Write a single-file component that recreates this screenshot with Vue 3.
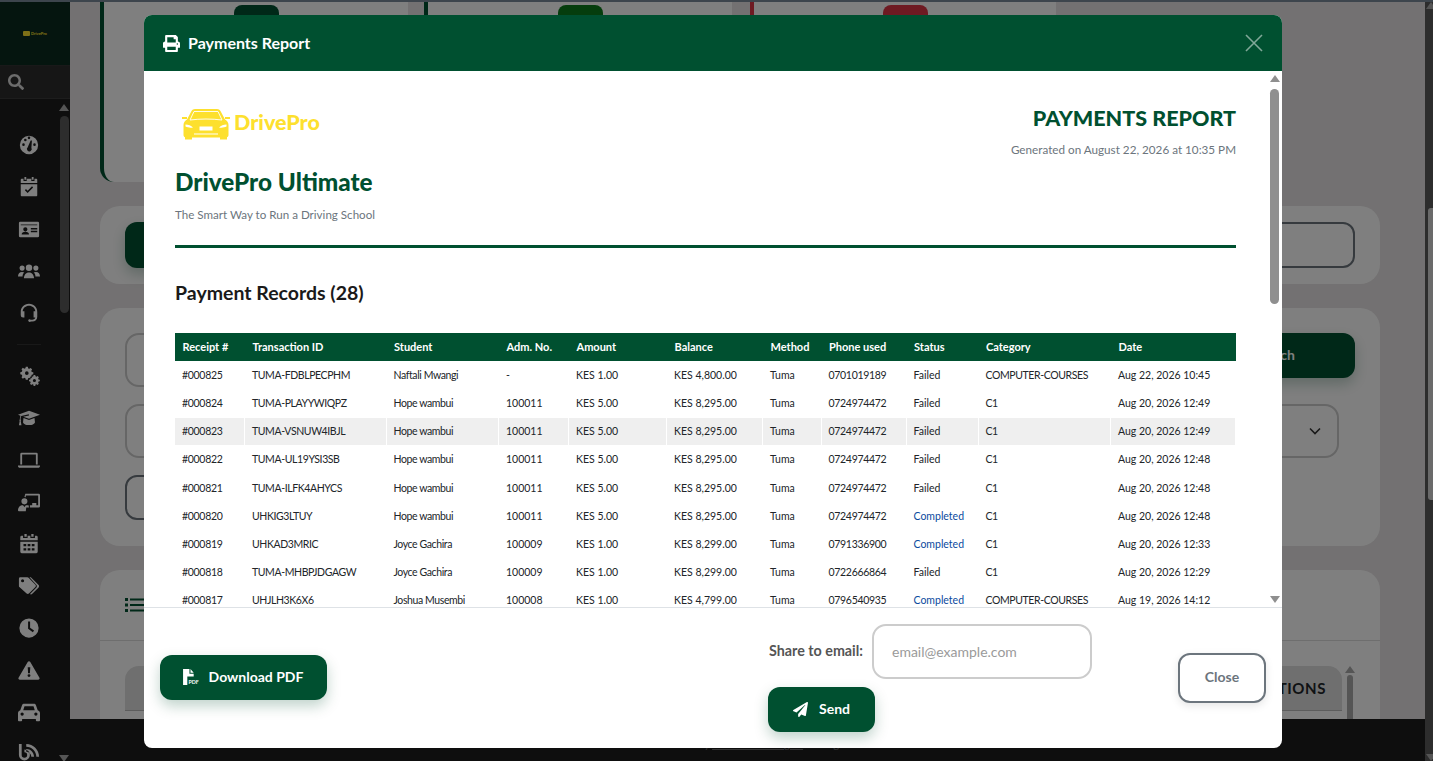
<script setup>
import { ref } from 'vue'

const columns = [
  { key: 'receipt', label: 'Receipt #', w: 70 },
  { key: 'txn', label: 'Transaction ID', w: 141.5 },
  { key: 'student', label: 'Student', w: 112.5 },
  { key: 'adm', label: 'Adm. No.', w: 70 },
  { key: 'amount', label: 'Amount', w: 98 },
  { key: 'balance', label: 'Balance', w: 96 },
  { key: 'method', label: 'Method', w: 58.5 },
  { key: 'phone', label: 'Phone used', w: 85 },
  { key: 'status', label: 'Status', w: 72 },
  { key: 'category', label: 'Category', w: 132.5 },
  { key: 'date', label: 'Date', w: 125 },
]

function row(receipt, txn, student, adm, amount, balance, phone, status, category, date) {
  return { receipt, txn, student, adm, amount, balance, method: 'Tuma', phone, status, category, date }
}

const payments = ref([
  row('#000825', 'TUMA-FDBLPECPHM', 'Naftali Mwangi', '-', 'KES 1.00', 'KES 4,800.00', '0701019189', 'Failed', 'COMPUTER-COURSES', 'Aug 22, 2026 10:45'),
  row('#000824', 'TUMA-PLAYYWIQPZ', 'Hope wambui', '100011', 'KES 5.00', 'KES 8,295.00', '0724974472', 'Failed', 'C1', 'Aug 20, 2026 12:49'),
  row('#000823', 'TUMA-VSNUW4IBJL', 'Hope wambui', '100011', 'KES 5.00', 'KES 8,295.00', '0724974472', 'Failed', 'C1', 'Aug 20, 2026 12:49'),
  row('#000822', 'TUMA-UL19YSI3SB', 'Hope wambui', '100011', 'KES 5.00', 'KES 8,295.00', '0724974472', 'Failed', 'C1', 'Aug 20, 2026 12:48'),
  row('#000821', 'TUMA-ILFK4AHYCS', 'Hope wambui', '100011', 'KES 5.00', 'KES 8,295.00', '0724974472', 'Failed', 'C1', 'Aug 20, 2026 12:48'),
  row('#000820', 'UHKIG3LTUY', 'Hope wambui', '100011', 'KES 5.00', 'KES 8,295.00', '0724974472', 'Completed', 'C1', 'Aug 20, 2026 12:48'),
  row('#000819', 'UHKAD3MRIC', 'Joyce Gachira', '100009', 'KES 1.00', 'KES 8,299.00', '0791336900', 'Completed', 'C1', 'Aug 20, 2026 12:33'),
  row('#000818', 'TUMA-MHBPJDGAGW', 'Joyce Gachira', '100009', 'KES 1.00', 'KES 8,299.00', '0722666864', 'Failed', 'C1', 'Aug 20, 2026 12:29'),
  row('#000817', 'UHJLH3K6X6', 'Joshua Musembi', '100008', 'KES 1.00', 'KES 4,799.00', '0796540935', 'Completed', 'COMPUTER-COURSES', 'Aug 19, 2026 14:12'),
])

const email = ref('')
const hoverRow = '#000823'

// sidebar icons, 24x24 box
const navTop = [
  'M12 2a10 10 0 1 0 0 20 10 10 0 0 0 0-20zM6 13a1.4 1.4 0 1 1 0-2.800 1.4 1.4 0 0 1 0 2.800zm2-5a1.400 1.400 0 1 1 0-2.800A1.400 1.400 0 0 1 8 8zm4-2.400a1.400 1.400 0 1 1 0-2.800 1.400 1.400 0 0 1 0 2.800zM14.600 15a2.600 2.600 0 1 1-4-.600L13.800 7h1.400zM18 13a1.400 1.400 0 1 1 0-2.800 1.400 1.400 0 0 1 0 2.800z',
  'M7 1h2v3H7zM15 1h2v3h-2zM4 3h2v2.500h3.500V3h5v2.500H18V3h2a1 1 0 0 1 1 1v3.500H3V4a1 1 0 0 1 1-1zM3 9h18v12a1 1 0 0 1-1 1H4a1 1 0 0 1-1-1zm4.500 6.500 3 3 6-6-1.200-1.200-4.800 4.800-1.800-1.800z',
  'M2 4h20a1.500 1.500 0 0 1 1 1.500v14a1.500 1.500 0 0 1-1.500 1.500h-19A1.500 1.500 0 0 1 1 19.500v-14A1.500 1.500 0 0 1 2 4zm1 3v1h18V7zm5 3a2.300 2.300 0 1 0 0 4.600A2.300 2.300 0 0 0 8 10zm-4 8h8c0-2-1.500-3-4-3s-4 1-4 3zm10-7v1.500h7V11zm0 3v1.500h7V14z',
  'M12 5a3.500 3.500 0 1 1 0 7 3.500 3.500 0 0 1 0-7zM4.500 6a2.800 2.800 0 1 1 0 5.600 2.800 2.800 0 0 1 0-5.600zm15 0a2.800 2.800 0 1 1 0 5.600 2.800 2.800 0 0 1 0-5.600zM0 18c0-3 1.500-5 4.500-5 1 0 1.800.3 2.400.7C5.500 14.800 5 16.400 5 18zm24 0h-5c0-1.600-.5-3.200-1.900-4.300.6-.4 1.400-.7 2.400-.7 3 0 4.500 2 4.500 5zM6.500 20c0-3.500 2-6.500 5.500-6.500s5.500 3 5.500 6.500z',
  'M12 2C6.500 2 3 6 3 11v3.500a2.500 2.500 0 0 0 2.500 2.500H7v-7H5.100C5.500 6.500 8.300 4 12 4s6.500 2.500 6.900 6H17v7h1.900c-.4 1.500-1.500 2.300-3.400 2.300h-1.700a1.500 1.500 0 1 0 0 2h1.700c3.300 0 5.500-2 5.500-5.300V11c0-5-3.500-9-9-9z',
]
const navBottom = [
  'M8.500 2h2.200l.4 1.700 1.300.5 1.500-.9 1.500 1.500-.9 1.500.5 1.300 1.700.4v2.200l-1.700.4-.5 1.300.9 1.500-1.500 1.500-1.500-.9-1.300.5-.4 1.700H8.500l-.4-1.700-1.300-.5-1.500.9-1.500-1.500.9-1.500-.5-1.300L2.500 10V7.800l1.700-.4.5-1.300-.9-1.500 1.500-1.500 1.500.9 1.300-.5zM9.600 6.900a2 2 0 1 0 0 4 2 2 0 0 0 0-4zM17 11h1.800l.3 1.400 1.100.4 1.200-.7 1.300 1.300-.7 1.200.4 1.100 1.400.3v1.800l-1.400.3-.4 1.100.7 1.200-1.300 1.300-1.200-.7-1.100.4-.3 1.400H17l-.3-1.400-1.100-.4-1.200.7-1.300-1.300.7-1.200-.4-1.100-1.400-.3V16l1.400-.3.4-1.100-.7-1.200 1.300-1.300 1.200.7 1.100-.4zm.9 4.200a1.700 1.700 0 1 0 0 3.400 1.700 1.700 0 0 0 0-3.400z',
  'M12 4 24 8.500l-12 4.300L5.700 10.500 12 9.200 11.800 8 3.500 9.800C3 11 2.800 12.500 2.800 13.500c.6.400.6 1.200.1 1.600L3.800 20H1l.9-4.900c-.5-.4-.5-1.200.1-1.600 0-1.300.2-2.700.7-4L0 8.500zM6 12l6 2.200 6-2.200.5 4.500c0 1.700-3 3.200-6.500 3.200s-6.500-1.500-6.500-3.200z',
  'M4 4h16a1.500 1.500 0 0 1 1.500 1.500V17h-2V6h-15v11h-2V5.500A1.500 1.500 0 0 1 4 4zM0 18h24v.800c0 .9-.9 1.700-2 1.700H2c-1.100 0-2-.8-2-1.700z',
  'M8 3h14.500A1.500 1.500 0 0 1 24 4.500v12a1.500 1.500 0 0 1-1.500 1.500H13v-2.500h2.500V13H20v2.500h2V5H8.500v1.800A5 5 0 0 0 7 6.500zM7 8a3.300 3.300 0 1 1 0 6.600A3.300 3.300 0 0 1 7 8zM0 21c0-3 2-5.500 4-5.500h1.500L7 17.500l1.500-2h3L12 18H9l-.5 4H1a1 1 0 0 1-1-1z',
  'M7 1h2.500v3H7zM14.500 1H17v3h-2.500zM4 3h1.500v2.500h5V3h3v2.500h5V3H20a1.500 1.500 0 0 1 1.500 1.500V8h-19V4.500A1.500 1.500 0 0 1 4 3zM2.500 9.500h19v11A1.500 1.500 0 0 1 20 22H4a1.500 1.500 0 0 1-1.500-1.500zM6 12v2.500h3V12zm4.500 0v2.500h3V12zm4.500 0v2.500h3V12zM6 16.500V19h3v-2.500zm4.500 0V19h3v-2.500zm4.500 0V19h3v-2.500z',
  'M1 4a1.500 1.500 0 0 1 1.500-1.500h7.700c.5 0 1 .2 1.300.6l7.500 7.500c.7.7.7 1.800 0 2.500l-7.100 7.100c-.7.7-1.800.7-2.500 0L1.500 13.200c-.3-.3-.5-.8-.5-1.300zm4 .5a1.700 1.700 0 1 0 0 3.400 1.700 1.700 0 0 0 0-3.400zm9-2 8.500 8.500c.7.7.7 1.800 0 2.500l-7.200 7.200c-.6.6-1.700.6-2.200 0l7-7.200c.7-.7.7-1.800 0-2.500L12.500 2.500z',
  'M12 1.500a10.500 10.500 0 1 0 0 21 10.500 10.500 0 0 0 0-21zM11 5h2.200v6.600l4.300 3.100-1.300 1.800L11 12.700z',
  'M12 2.500c.6 0 1.100.3 1.400.8l10 17.200c.6 1-.2 2.200-1.400 2.200H2c-1.200 0-2-1.200-1.400-2.200l10-17.200c.3-.5.8-.8 1.400-.8zM10.600 9l.4 6.500h2l.4-6.500zM12 16.500a1.600 1.600 0 1 0 0 3.200 1.600 1.600 0 0 0 0-3.200z',
  'M6.500 3h11c1 0 1.800.6 2.100 1.500L21.500 10c1.400.4 2.500 1.700 2.500 3.200V21a1 1 0 0 1-1 1h-2.500a1 1 0 0 1-1-1v-1.500h-15V21a1 1 0 0 1-1 1H1a1 1 0 0 1-1-1v-7.800C0 11.700 1.100 10.400 2.500 10l1.900-5.500C4.700 3.600 5.500 3 6.500 3zm.6 2.700L5.700 10h12.600l-1.400-4.300zM4.500 12.500a1.800 1.800 0 1 0 0 3.600 1.800 1.800 0 0 0 0-3.600zm15 0a1.800 1.800 0 1 0 0 3.600 1.800 1.800 0 0 0 0-3.600z',
  'M1 1h3v12a3 3 0 1 0 3-3V7a6 6 0 1 1-6 6zM9 1c7.700 0 14 6.300 14 14h-3C20 8.900 15.100 4 9 4zm0 5.500c4.700 0 8.500 3.800 8.500 8.500h-3c0-3-2.500-5.500-5.500-5.500z',
]
</script>

<template>
  <div class="page">
    <div class="top-strip"></div>
    <div class="shell">
      <aside class="sidebar">
        <div class="side-logo">
          <span class="side-logo-car"></span>
          <span class="side-logo-text">DrivePro</span>
        </div>
        <div class="side-search">
          <svg class="side-search-icon" viewBox="0 0 512 512"><path fill="currentColor" d="M505 442.7L405.3 343c-4.500-4.500-10.600-7-17-7H372c27.600-35.300 44-79.700 44-128C416 93.100 322.900 0 208 0S0 93.100 0 208s93.100 208 208 208c48.300 0 92.700-16.400 128-44v16.300c0 6.400 2.500 12.500 7 17l99.700 99.700c9.400 9.400 24.600 9.400 33.900 0l28.300-28.300c9.400-9.400 9.400-24.600.1-34zM208 336c-70.700 0-128-57.200-128-128 0-70.700 57.200-128 128-128 70.700 0 128 57.200 128 128 0 70.700-57.200 128-128 128z"/></svg>
        </div>
        <div class="side-body">
          <nav class="side-nav">
            <svg v-for="(d, i) in navTop" :key="'t' + i" class="nav-icon" viewBox="0 0 24 24"><path fill="currentColor" fill-rule="evenodd" :d="d"/></svg>
            <div class="side-sep"></div>
            <svg v-for="(d, i) in navBottom" :key="'b' + i" class="nav-icon" viewBox="0 0 24 24"><path fill="currentColor" fill-rule="evenodd" :d="d"/></svg>
          </nav>
          <div class="side-scroll">
            <span class="arrow-up"></span>
            <span class="side-thumb"></span>
            <span class="arrow-down side-arrow-bottom"></span>
          </div>
        </div>
      </aside>

      <div class="main">
        <div class="content">
          <div class="stat-row">
            <div class="stat-card"><span class="stat-badge"></span></div>
            <div class="stat-card"><span class="stat-badge badge-ok"></span></div>
            <div class="stat-card stat-card-red"><span class="stat-badge badge-red"></span></div>
          </div>

          <div class="card card-bar">
            <button class="bg-btn bar-btn"></button>
            <div class="bg-outline"></div>
          </div>

          <div class="card card-filters">
            <div class="filter-row">
              <div class="bg-field"></div>
              <button class="bg-btn search-btn">Search</button>
            </div>
            <div class="filter-row filter-row-select">
              <div class="bg-field bg-select">
                <svg class="chevron" viewBox="0 0 12 8"><path d="M1 1.500 6 6.500 11 1.500" fill="none" stroke="currentColor" stroke-width="1.600"/></svg>
              </div>
            </div>
            <div class="bg-reset"></div>
          </div>

          <div class="card card-list">
            <div class="list-head">
              <svg class="list-icon" viewBox="0 0 20 16"><path fill="currentColor" d="M0 1h3v3H0zM5 1.500h15v2H5zM0 6.500h3v3H0zM5 7h15v2H5zM0 12h3v3H0zM5 12.500h15v2H5z"/></svg>
            </div>
            <div class="list-body">
              <div class="list-table-head">ACTIONS</div>
              <div class="list-scroll">
                <span class="arrow-up"></span>
                <span class="list-thumb"></span>
              </div>
            </div>
          </div>
        </div>
        <footer class="foot">Powered by <u>Tuma Technologies</u> · All rights reserved</footer>
      </div>

      <div class="page-scroll">
        <span class="arrow-up"></span>
        <span class="page-thumb"></span>
        <span class="arrow-down"></span>
      </div>
    </div>

    <div class="overlay"></div>

    <div class="modal">
      <header class="modal-head">
        <svg class="head-icon" viewBox="0 0 512 512"><path fill="currentColor" d="M448 192V77.250c0-8.490-3.370-16.620-9.370-22.630L393.370 9.370c-6-6-14.140-9.370-22.630-9.370H96C78.330 0 64 14.330 64 32v160c-35.350 0-64 28.650-64 64v112c0 8.840 7.160 16 16 16h48v96c0 17.670 14.330 32 32 32h320c17.670 0 32-14.330 32-32v-96h48c8.840 0 16-7.160 16-16V256c0-35.350-28.650-64-64-64zm-64 256H128v-96h256v96zm0-224H128V64h192v48c0 8.840 7.160 16 16 16h48v96zm48 72c-13.250 0-24-10.750-24-24 0-13.260 10.750-24 24-24s24 10.740 24 24c0 13.250-10.750 24-24 24z"/></svg>
        <h1 class="modal-title">Payments Report</h1>
        <svg class="modal-x" viewBox="0 0 18 18"><path d="M1 1 17 17M17 1 1 17" fill="none" stroke="currentColor" stroke-width="1.600"/></svg>
      </header>

      <div class="modal-mid">
        <div class="report">
          <div class="report-top">
            <div>
              <div class="logo">
                <svg class="logo-car" viewBox="0 0 48 31">
                  <path fill="#fde02e" d="M3 28h7v2.500H3zM38 28h7v2.500h-7z"/>
                  <path fill="#fde02e" d="M0 8h5v2H0zM43 8h5v2h-5z"/>
                  <path fill="#fde02e" d="M9.500 2C10.200.700 11.500 0 13 0h22c1.500 0 2.800.7 3.500 2L43 10.500c2 1.200 3.500 3 3.500 5.500v10c0 1.500-1 2.500-2.500 2.500H4c-1.500 0-2.500-1-2.500-2.500V16c0-2.500 1.500-4.300 3.500-5.500z"/>
                  <path fill="none" stroke="#fff" stroke-width=".9" d="M12 2.500h24l4 8.500c-10-1.300-22-1.300-32 0z"/>
                  <path fill="#fff" d="M3.500 15.500c3 0 5.500 1 7.500 3-3 .5-5.500 0-7.500-1zM44.500 15.500c-3 0-5.500 1-7.500 3 3 .5 5.500 0 7.500-1zM17.500 17.500h13v4h-13zM12 24.500h24v1H12z"/>
                </svg>
                <span class="logo-text">DrivePro</span>
              </div>
              <h2 class="brand">DrivePro Ultimate</h2>
              <p class="tagline">The Smart Way to Run a Driving School</p>
            </div>
            <div class="report-meta">
              <h2 class="report-title">PAYMENTS REPORT</h2>
              <p class="generated">Generated on August 22, 2026 at 10:35 PM</p>
            </div>
          </div>
          <div class="rule"></div>
          <h3 class="records">Payment Records (28)</h3>

          <table class="pay-table">
            <colgroup>
              <col v-for="c in columns" :key="c.key" :style="{ width: c.w + 'px' }">
            </colgroup>
            <thead>
              <tr>
                <th v-for="c in columns" :key="c.key">{{ c.label }}</th>
              </tr>
            </thead>
            <tbody>
              <tr v-for="p in payments" :key="p.receipt" :class="{ hovered: p.receipt === hoverRow }">
                <td
                  v-for="c in columns"
                  :key="c.key"
                  :class="['c-' + c.key, { done: c.key === 'status' && p.status === 'Completed' }]"
                >{{ p[c.key] }}</td>
              </tr>
            </tbody>
          </table>
        </div>
        <div class="modal-scroll">
          <span class="arrow-up"></span>
          <span class="modal-thumb"></span>
          <span class="arrow-down modal-arrow-bottom"></span>
        </div>
      </div>

      <footer class="modal-foot">
        <button class="btn-green btn-download">
          <svg class="pdf-icon" viewBox="0 0 16 16">
            <path fill="currentColor" d="M1 0h6v4.500h4V7H5v8H1zM8 0l3 3.500H8z"/>
            <text x="6" y="14.500" class="pdf-label">PDF</text>
          </svg>
          <span class="btn-text">Download PDF</span>
        </button>

        <div class="share">
          <div class="share-row">
            <label class="share-label" for="share-email">Share to email:</label>
            <input id="share-email" v-model="email" class="share-input" type="email" placeholder="email@example.com">
          </div>
          <button class="btn-green btn-send">
            <svg class="send-icon" viewBox="0 0 512 512"><path fill="currentColor" d="M476 3.200L12.500 270.600c-18.100 10.400-15.800 35.600 2.200 43.200L121 358.400l287.300-253.200c5.500-4.900 13.300 2.600 8.600 8.300L176 407v80.500c0 23.600 28.500 32.900 42.500 15.800L282 426l124.600 52.200c14.200 6 30.400-2.900 33-18.200l72-432C515 7.800 493.300-6.800 476 3.200z"/></svg>
            <span class="btn-text">Send</span>
          </button>
        </div>

        <button class="btn-close"><span class="btn-text btn-text-close">Close</span></button>
      </footer>
    </div>
  </div>
</template>

<style>
html, body { margin: 0; overflow: hidden; }
</style>

<style scoped>
.page {
  position: relative;
  height: 761px;
  overflow: hidden;
  display: flex;
  flex-direction: column;
  font-family: Lato, "Open Sans", sans-serif;
  background: #e6e3e4;
}
.top-strip { height: 2px; background: #7a8a9a; flex: none; }
.shell { flex: 1; display: flex; min-height: 0; }

/* sidebar */
.sidebar { width: 70px; flex: none; background: #1c1c1c; display: flex; flex-direction: column; }
.side-logo { height: 63px; background: #0a2a1e; border-bottom: 1px solid #333; display: flex; align-items: center; justify-content: center; gap: 1px; padding-right: 0; }
.side-logo-car { width: 7px; height: 5px; background: #fde02e; border-radius: 1px; }
.side-logo-text { font-size: 4px; font-weight: 700; color: #fde02e; }
.side-search { height: 32px; background: #2c2c2c; border-bottom: 1px solid #3a3a3a; display: flex; align-items: center; padding-left: 8px; }
.side-search-icon { width: 16px; height: 16px; color: #d8d8d8; }
.side-body { flex: 1; display: flex; min-height: 0; overflow: hidden; }
.side-nav { width: 58px; display: flex; flex-direction: column; align-items: center; padding-top: 35px; gap: 20px; color: #fff; }
.nav-icon { width: 22px; height: 22px; flex: none; }
.side-sep { width: 24px; height: 1px; background: #333; flex: none; }
.side-scroll { width: 12px; position: relative; display: flex; flex-direction: column; align-items: center; padding-top: 5px; gap: 5px; height: 663px; box-sizing: border-box; }
.side-thumb { width: 9px; height: 197px; background: #5a5a5a; border-radius: 5px; }
.side-arrow-bottom { position: absolute; bottom: 0; }

.arrow-up, .arrow-down { width: 0; height: 0; border-left: 5px solid transparent; border-right: 5px solid transparent; flex: none; }
.arrow-up { border-bottom: 7px solid #aaa; }
.arrow-down { border-top: 7px solid #aaa; }

/* page behind the modal */
.main { flex: 1; min-width: 0; display: flex; flex-direction: column; }
.content { flex: 1; min-height: 0; overflow: hidden; padding: 0 45px 0 30px; display: flex; flex-direction: column; gap: 24px; }
.stat-row { display: flex; gap: 16px; flex: none; }
.stat-card { width: 308px; height: 180px; box-sizing: border-box; background: #fff; border-left: 4px solid #005030; border-bottom-left-radius: 14px; display: flex; justify-content: center; padding-top: 3px; }
.stat-card-red { border-left-color: #dc3545; width: 306px; margin-left: 2px; }
.stat-badge { width: 45px; height: 30px; border-radius: 8px; background: #005030; }
.badge-ok { background: #0a7a1a; }
.badge-red { background: #dc3545; }

.card { background: #fff; border-radius: 20px; flex: none; box-sizing: border-box; }
.card-bar { height: 78px; padding: 16px 25px; display: flex; justify-content: space-between; }
.bg-btn { border: none; border-radius: 12px; background: #005030; color: #fff; font: 700 14px Lato, sans-serif; box-shadow: 0 6px 14px rgba(0, 80, 48, .25); }
.bar-btn { width: 300px; height: 46px; }
.bg-outline { width: 500px; height: 46px; box-sizing: border-box; border: 2px solid #6c757d; border-radius: 12px; }

.card-filters { height: 238px; padding: 25px 25px 0; display: flex; flex-direction: column; gap: 17px; }
.filter-row { display: flex; gap: 16px; align-items: flex-start; }
.filter-row-select { padding-right: 16px; }
.bg-field { flex: 1; height: 54px; box-sizing: border-box; border: 2px solid #ccc; border-radius: 14px; display: flex; align-items: center; justify-content: flex-end; padding-right: 16px; }
.chevron { width: 12px; height: 8px; color: #333; }
.search-btn { width: 160px; height: 45px; text-align: right; padding: 0 60px 2px 0; }
.bg-reset { width: 200px; height: 45px; box-sizing: border-box; border: 2px solid #6c757d; border-radius: 12px; }

.card-list { flex: 1; min-height: 300px; }
.list-head { height: 70px; border-bottom: 1px solid #ddd; padding-left: 25px; display: flex; align-items: center; color: #005030; }
.list-icon { width: 20px; height: 16px; }
.list-body { padding: 25px 25px 0 25px; display: flex; gap: 3px; }
.list-table-head { flex: 1; height: 44px; background: #dedede; border-radius: 14px 14px 0 0; border-bottom: 1px solid #bbb; text-align: right; padding-right: 16px; line-height: 44px; font-size: 15px; font-weight: 700; letter-spacing: .6px; color: #212529; }
.list-scroll { width: 10px; display: flex; flex-direction: column; align-items: center; gap: 2px; }
.list-thumb { width: 6px; height: 60px; background: #aaa; border-radius: 3px; }

.foot { height: 42px; flex: none; background: #1c1c1c; color: #666; font-size: 11px; line-height: 50px; padding-left: 56px; text-align: center; white-space: nowrap; box-sizing: border-box; }
.page-scroll { width: 8px; flex: none; background: #5a5a5a; display: flex; flex-direction: column; align-items: flex-end; justify-content: space-between; position: relative; }
.page-scroll .arrow-up, .page-scroll .arrow-down { margin-right: -3px; }
.page-thumb { position: absolute; right: 0; top: 206px; width: 5px; height: 292px; background: #fff; border-radius: 3px 0 0 3px; opacity: .75; }

.overlay { position: absolute; inset: 0; background: rgba(0, 0, 0, .5); }

/* modal */
.modal {
  position: absolute;
  left: 144px;
  top: 15px;
  width: 1138px;
  height: 733px;
  background: #fff;
  border-radius: 8px;
  overflow: hidden;
  display: flex;
  flex-direction: column;
}
.modal-head { height: 56px; flex: none; background: #005030; color: #fff; display: flex; align-items: center; padding: 0 19px; }
.head-icon { width: 17px; height: 17px; margin-right: 8px; }
.modal-title { margin: 0 0 2px; font-size: 16px; font-weight: 700; flex: 1; }
.modal-x { width: 18px; height: 18px; color: rgba(255, 255, 255, .5); }

.modal-mid { flex: 1; min-height: 0; display: flex; border-bottom: 1px solid #dee2e6; }
.report { flex: 1; min-width: 0; overflow: hidden; padding: 30px 34px 0 31px; }
.report-top { display: flex; justify-content: space-between; height: 144px; }
.logo { display: flex; align-items: center; gap: 4px; padding-left: 7px; height: 46px; }
.logo-car { width: 48px; height: 31px; }
.logo-text { font-size: 21.5px; font-weight: 900; color: #fde02e; margin-bottom: 4px; }
.brand { margin: 20px 0 0; font-size: 24.300px; line-height: 30px; font-weight: 900; color: #005030; }
.tagline { margin: 10px 0 0; font-size: 11.600px; line-height: 16px; color: #6c757d; }
.report-meta { text-align: right; padding-top: 4px; }
.report-title { margin: 0; font-size: 21.500px; line-height: 26px; font-weight: 900; color: #005030; }
.generated { margin: 10px 0 0; font-size: 11.700px; line-height: 16px; color: #6c757d; }
.rule { height: 3px; background: #005030; }
.records { margin: 32px 0 0; font-size: 19.500px; line-height: 26px; font-weight: 700; color: #1a1a1a; }

.pay-table { margin: 27px 0 0 -1px; width: 1062px; table-layout: fixed; border-collapse: collapse; font-size: 10.500px; color: #212529; }
.pay-table th { height: 28px; padding: 0 7px 0 8px; box-sizing: border-box; background: #005030; color: #fff; font-size: 11px; font-weight: 700; text-align: left; white-space: nowrap; }
.pay-table td { height: 28.150px; box-sizing: border-box; padding: 0 7px; border: 1px solid #fff; white-space: nowrap; overflow: hidden; }
.pay-table tr.hovered td { background: #efefef; }
.pay-table td.done { color: #0b4a9e; }
.pay-table .c-receipt, .pay-table .c-phone { letter-spacing: -.3px; }
.pay-table .c-txn, .pay-table .c-student, .pay-table .c-category { letter-spacing: -.4px; }

.modal-scroll { width: 12px; flex: none; display: flex; flex-direction: column; align-items: flex-start; padding-top: 4px; gap: 7px; position: relative; }
.modal-thumb { width: 9px; height: 215px; background: #8f8f8f; border-radius: 5px; }
.modal-scroll .arrow-up { border-bottom-color: #8f8f8f; }
.modal-arrow-bottom { position: absolute; bottom: 4px; border-top-color: #8f8f8f; }

.modal-foot { height: 140px; flex: none; display: flex; align-items: center; padding: 0 16px; }
.btn-green { border: none; border-radius: 12px; background: #005030; color: #fff; font: 700 14px Lato, sans-serif; display: flex; align-items: center; justify-content: center; box-shadow: 0 6px 14px rgba(0, 80, 48, .25); }
.btn-text { position: relative; top: -1px; }
.btn-text-close { top: -2px; }
.btn-download { width: 167px; height: 45px; gap: 10px; margin-top: -2px; padding-right: 8px; }
.pdf-icon { width: 17px; height: 17px; }
.pdf-label { font: 700 5px Lato, sans-serif; fill: currentColor; }
.share { margin-left: auto; margin-right: 86px; display: flex; flex-direction: column; align-items: flex-start; gap: 8px; }
.share-row { display: flex; align-items: center; gap: 9px; }
.share-label { width: 95px; text-align: right; white-space: nowrap; font-size: 14.300px; font-weight: 700; color: #555; margin-bottom: 2px; }
.share-input { width: 220px; height: 55px; box-sizing: border-box; border: 2px solid #ccc; border-radius: 14px; padding: 0 18px; font: 14px Lato, sans-serif; outline: none; }
.share-input::placeholder { color: #9a9a9a; }
.btn-send { width: 107px; height: 45px; gap: 11px; }
.send-icon { width: 15px; height: 15px; }
.btn-close { width: 88px; height: 50px; box-sizing: border-box; background: #fff; border: 2px solid #6c757d; border-radius: 12px; color: #6c757d; font: 700 14px Lato, sans-serif; box-shadow: 0 3px 8px rgba(0, 0, 0, .1); }
</style>
